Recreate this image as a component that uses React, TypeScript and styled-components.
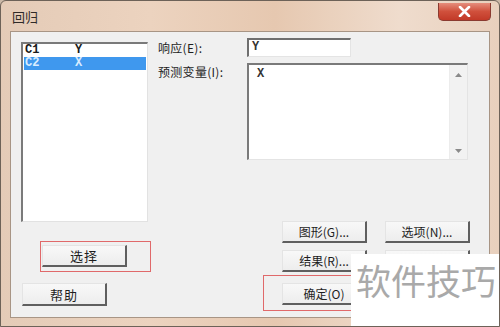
import React from "react";
import styled, { createGlobalStyle } from "styled-components";

const GlobalStyle = createGlobalStyle`
  html, body {
    margin: 0;
    padding: 0;
    background: #cbb9a8;
  }
  body {
    font-family: "Noto Sans CJK SC", "Liberation Sans", sans-serif;
  }
`;

const Window = styled.div`
  position: relative;
  box-sizing: border-box;
  width: 500px;
  height: 327px;
  overflow: hidden;
  display: flex;
  flex-direction: column;
  padding: 0 9px 8px 9px;
  border: 1px solid #6d6258;
  border-radius: 6px 6px 0 0;
  background: linear-gradient(90deg, #e4cbb7 0%, #ecd3bf 30%, #e6c8b0 55%, #efdccd 80%, #e8d0bd 100%);
`;

const TitleBar = styled.div`
  height: 30px;
  display: flex;
  align-items: flex-start;
  justify-content: space-between;
`;

const Title = styled.span`
  margin-top: 8px;
  margin-left: 2px;
  font-size: 13px;
  line-height: 16px;
  color: #2e2a28;
`;

const CloseButton = styled.div`
  box-sizing: border-box;
  width: 53px;
  height: 18px;
  margin-top: 2px;
  margin-right: -1px;
  display: flex;
  align-items: center;
  justify-content: center;
  border: 1px solid #8a3a30;
  border-top: none;
  border-radius: 0 0 5px 5px;
  background: linear-gradient(180deg, #e58d7c 0%, #d0503c 50%, #c23a28 100%);
`;

const Client = styled.div`
  flex: 1;
  box-sizing: border-box;
  display: flex;
  padding: 6px 0 0 10px;
  border: 1px solid #a89585;
  background: #f0f0f0;
`;

const LeftColumn = styled.div`
  width: 130px;
  display: flex;
  flex-direction: column;
`;

const ListBox = styled.div`
  box-sizing: border-box;
  width: 127px;
  height: 180px;
  margin-top: 4px;
  padding: 0 1px;
  background: #fff;
  border-top: 2px solid #7a7a7a;
  border-left: 2px solid #7a7a7a;
  border-right: 1px solid #e2e2e2;
  border-bottom: 1px solid #e2e2e2;
`;

const ListRow = styled.div<{ $selected?: boolean }>`
  display: flex;
  height: 13px;
  padding-left: 1px;
  font-family: "Liberation Mono", "DejaVu Sans Mono", monospace;
  font-size: 12px;
  font-weight: bold;
  line-height: 13px;
  color: ${(p) => (p.$selected ? "#d8ecff" : "#1a1a1a")};
  background: ${(p) => (p.$selected ? "#3f98ee" : "transparent")};
`;

const ColName = styled.span`
  width: 50px;
`;

const Highlight = styled.div<{ $w: number; $h: number; $pl: number; $pt: number }>`
  box-sizing: border-box;
  width: ${(p) => p.$w}px;
  height: ${(p) => p.$h}px;
  padding: ${(p) => p.$pt}px 0 0 ${(p) => p.$pl}px;
  border: 1px solid #e0696a;
`;

const Button = styled.div<{ $bold?: boolean }>`
  box-sizing: border-box;
  width: 85px;
  height: 22px;
  display: flex;
  align-items: center;
  justify-content: center;
  font-size: ${(p) => (p.$bold ? 13 : 12)}px;
  letter-spacing: ${(p) => (p.$bold ? 1 : 0)}px;
  color: #1e1e1e;
  background: linear-gradient(180deg, #f8f8f8 0%, #ededed 100%);
  border-top: 1px solid #e4e4e4;
  border-left: 1px solid #e4e4e4;
  border-right: 2px solid #5f5f5f;
  border-bottom: 2px solid #5f5f5f;
`;

const SelectBox = styled(Highlight)`
  margin-top: 19px;
  margin-left: 19px;
`;

const HelpButton = styled(Button)`
  margin-top: 11px;
  margin-left: 1px;
  height: 23px;
`;

const RightColumn = styled.div`
  flex: 1;
  margin-left: 7px;
  display: flex;
  flex-direction: column;
`;

const FieldRow = styled.div<{ $top: number; $align: string }>`
  display: flex;
  align-items: ${(p) => p.$align};
  margin-top: ${(p) => p.$top}px;
`;

const Label = styled.span<{ $offset?: number }>`
  width: 89px;
  margin-top: ${(p) => p.$offset ?? 0}px;
  font-size: 12px;
  line-height: 16px;
  color: #1e1e1e;
  letter-spacing: 0.3px;
`;

const TextInput = styled.div`
  box-sizing: border-box;
  width: 104px;
  height: 19px;
  padding: 1px 0 0 3px;
  background: #fff;
  border-top: 2px solid #6f6f6f;
  border-left: 2px solid #6f6f6f;
  border-right: 1px solid #e4e4e4;
  border-bottom: 1px solid #e4e4e4;
  font-family: "Liberation Mono", "DejaVu Sans Mono", monospace;
  font-size: 12px;
  font-weight: bold;
  line-height: 13px;
  color: #333;
`;

const TextArea = styled.div`
  box-sizing: border-box;
  width: 221px;
  height: 97px;
  display: flex;
  background: #fff;
  border-top: 2px solid #7a7a7a;
  border-left: 2px solid #7a7a7a;
  border-right: 1px solid #e4e4e4;
  border-bottom: 1px solid #e4e4e4;
`;

const AreaText = styled.div`
  flex: 1;
  padding: 3px 0 0 8px;
  font-family: "Liberation Mono", "DejaVu Sans Mono", monospace;
  font-size: 12px;
  font-weight: bold;
  line-height: 13px;
  color: #333;
`;

const ScrollBar = styled.div`
  width: 17px;
  display: flex;
  flex-direction: column;
  justify-content: space-between;
  align-items: center;
  padding: 8px 0 6px;
  background: #f2f2f2;
  border-left: 1px solid #ececec;
`;

const ButtonGrid = styled.div`
  margin-top: 61px;
  margin-left: 124px;
  display: grid;
  grid-template-columns: 85px 85px;
  grid-auto-rows: 22px;
  column-gap: 18px;
  row-gap: 7px;
`;

const OkRow = styled.div`
  display: flex;
  align-items: flex-start;
  margin-top: 3px;
  margin-left: 105px;
`;

const CancelButton = styled(Button)`
  margin-top: 8px;
  margin-left: 10px;
`;

const Watermark = styled.div`
  position: absolute;
  left: 350px;
  top: 253px;
  width: 150px;
  height: 74px;
  box-sizing: border-box;
  padding: 4px 0 0 5px;
  background: #fff;
  font-family: "Noto Sans CJK SC", sans-serif;
  font-size: 35px;
  line-height: 44px;
  color: #a9a9a9;
  white-space: nowrap;
`;

function Arrow({ up }: { up?: boolean }) {
  return (
    <svg width="7" height="4" viewBox="0 0 7 4">
      <path d={up ? "M0 4 L3.5 0 L7 4 Z" : "M0 0 L3.5 4 L7 0 Z"} fill="#8a8a8a" />
    </svg>
  );
}

export default function App() {
  return (
    <>
      <GlobalStyle />
      <Window>
        <TitleBar>
          <Title>回归</Title>
          <CloseButton>
            <svg width="13" height="11" viewBox="0 0 13 11">
              <path d="M2 1 L11 10 M11 1 L2 10" stroke="#fff" strokeWidth="2.6" strokeLinecap="round" />
            </svg>
          </CloseButton>
        </TitleBar>
        <Client>
          <LeftColumn>
            <ListBox>
              <ListRow>
                <ColName>C1</ColName>
                <span>Y</span>
              </ListRow>
              <ListRow $selected>
                <ColName>C2</ColName>
                <span>X</span>
              </ListRow>
            </ListBox>
            <SelectBox $w={111} $h={31} $pl={1} $pt={3}>
              <Button $bold>选择</Button>
            </SelectBox>
            <HelpButton $bold>帮助</HelpButton>
          </LeftColumn>
          <RightColumn>
            <FieldRow $top={0} $align="center">
              <Label>响应(E):</Label>
              <TextInput>Y</TextInput>
            </FieldRow>
            <FieldRow $top={6} $align="flex-start">
              <Label $offset={1}>预测变量(I):</Label>
              <TextArea>
                <AreaText>X</AreaText>
                <ScrollBar>
                  <Arrow up />
                  <Arrow />
                </ScrollBar>
              </TextArea>
            </FieldRow>
            <ButtonGrid>
              <Button>图形(G)...</Button>
              <Button>选项(N)...</Button>
              <Button>结果(R)...</Button>
              {/* 存储 button sits under the watermark, only its top edge shows */}
              <Button />
            </ButtonGrid>
            <OkRow>
              <Highlight $w={112} $h={36} $pl={18} $pt={7}>
                <Button>确定(O)</Button>
              </Highlight>
              <CancelButton />
            </OkRow>
          </RightColumn>
        </Client>
        <Watermark>软件技巧</Watermark>
      </Window>
    </>
  );
}
